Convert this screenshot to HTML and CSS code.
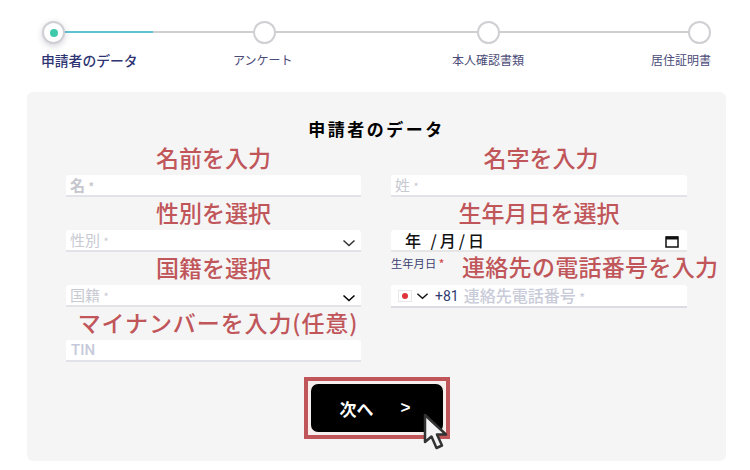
FILE: index.html
```html
<!DOCTYPE html>
<html lang="ja">
<head>
<meta charset="utf-8">
<title>申請者のデータ</title>
<link rel="stylesheet" href="styles.css">
</head>
<body>
<div class="stepper">
  <div class="track"><div class="track-fill"></div></div>
  <div class="dots">
    <span class="dot dot-active"><i></i></span>
    <span class="dot"></span>
    <span class="dot"></span>
    <span class="dot"></span>
  </div>
  <div class="step-labels">
    <span class="step-current">申請者のデータ</span>
    <span>アンケート</span>
    <span>本人確認書類</span>
    <span>居住証明書</span>
  </div>
</div>
<main class="panel">
  <h1>申請者のデータ</h1>
  <div class="grid">
    <div class="col">
      <div class="note">名前を入力</div>
      <div class="field"><span class="ph ph-bold">名 <small>*</small></span></div>
      <div class="note">性別を選択</div>
      <div class="field"><span class="ph">性別 <small>*</small></span>
        <svg class="chev" viewBox="0 0 14 8"><path d="M1.5 1.5 7 6.500l5.500-5"/></svg></div>
      <div class="note">国籍を選択</div>
      <div class="field"><span class="ph">国籍 <small>*</small></span>
        <svg class="chev chev-dark" viewBox="0 0 14 8"><path d="M1.5 1.5 7 6.500l5.500-5"/></svg></div>
      <div class="note note-wide">マイナンバーを入力(任意)</div>
      <div class="field"><span class="ph ph-tin">TIN</span></div>
    </div>
    <div class="col">
      <div class="note note-right">名字を入力</div>
      <div class="field"><span class="ph">姓 <small>*</small></span></div>
      <div class="note">生年月日を選択</div>
      <div class="field field-date"><span class="date">年 /月/日</span>
        <svg class="cal" viewBox="0 0 14 14"><path d="M1 3h12v10H1z" fill="none" stroke="#111" stroke-width="1.500"/><path d="M1 2.500h12v3H1z" fill="#111"/></svg></div>
      <div class="dob-row">
        <span class="dob">生年月日 <b>*</b></span>
        <span class="note note-phone">連絡先の電話番号を入力</span>
      </div>
      <div class="field field-phone">
        <span class="flag"><i></i></span>
        <svg class="chev chev-phone" viewBox="0 0 14 8"><path d="M1.5 1.5 7 6.500l5.500-5"/></svg>
        <span class="dial">+81</span>
        <span class="ph ph-phone">連絡先電話番号 <small>*</small></span>
      </div>
    </div>
  </div>
  <div class="actions">
    <div class="highlight">
      <button class="next" type="button"><span>次へ</span><span class="gt">&gt;</span></button>
      <svg class="cursor" viewBox="0 0 25 38"><path d="M2 2v27l6.500-5.500 5 11.500 5.500-2.500-5-11h9z" fill="#f4f4f6" stroke="#333" stroke-width="2.500" stroke-linejoin="round"/></svg>
    </div>
  </div>
</main>
</body>
</html>
```
FILE: styles.css
```css
* { box-sizing: border-box; }
html, body { margin: 0; padding: 0; }
body {
  width: 750px;
  height: 470px;
  overflow: hidden;
  background: #fff;
  font-family: "Noto Sans CJK JP", "Noto Sans", sans-serif;
}
.stepper {
  position: relative;
  padding: 21px 0 0 42px;
  height: 92px;
}
.track {
  position: absolute;
  left: 53px;
  top: 31px;
  width: 646px;
  height: 2px;
  background: #cfcfd2;
}
.track-fill {
  width: 100px;
  height: 2px;
  background: #5fc3cf;
}
.dots {
  position: relative;
  display: grid;
  grid-template-columns: 211px 224px 211px 22px;
}
.dot {
  display: flex;
  align-items: center;
  justify-content: center;
  width: 23px;
  height: 23px;
  border: 2px solid #cfcfd4;
  border-radius: 50%;
  background: #fff;
}
.dot-active { box-shadow: 0 2px 6px rgba(60, 60, 90, .22); }
.dot i {
  width: 8px;
  height: 8px;
  border-radius: 50%;
  background: #3fc9ab;
}
.step-labels {
  display: grid;
  grid-template-columns: 192px 219px 199px auto;
  margin: 7px 0 0 -1px;
  font-size: 12px;
  line-height: 18px;
  color: #4a4a78;
  white-space: nowrap;
}
.step-current {
  font-size: 13.800px;
  font-weight: 500;
  color: #2e3473;
}
.panel {
  width: 699px;
  height: 369px;
  margin-left: 27px;
  padding: 26px 39px 0;
  background: #f5f5f5;
  border-radius: 6px;
}
h1 {
  margin: 0 0 2px;
  font-size: 17px;
  line-height: 22px;
  font-weight: 700;
  letter-spacing: 2.500px;
  text-align: center;
  color: #000;
}
.grid {
  display: grid;
  grid-template-columns: 295px 296px;
  gap: 30px;
}
.col { display: flex; flex-direction: column; }
.note {
  height: 33px;
  font-size: 23px;
  line-height: 30px;
  font-weight: 500;
  text-align: center;
  color: #c0565a;
  white-space: nowrap;
}
.note-wide { padding-left: 9px; letter-spacing: .9px; }
.note-right { padding-left: 4px; }
.field {
  position: relative;
  display: flex;
  align-items: center;
  height: 22px;
  padding-left: 4px;
  background: #fff;
  border-bottom: 2px solid #e2e3e8;
  border-radius: 3px 3px 0 0;
}
.ph {
  font-size: 15px;
  line-height: 20px;
  color: #c8cad2;
}
.ph small { font-size: 11px; }
.ph-bold { font-weight: 700; color: #c4c6cc; }
.ph-tin { padding-left: 1px; font-family: Roboto, sans-serif; font-weight: 500; color: #c6c9da; }
.chev {
  position: absolute;
  right: 5px;
  top: 9px;
  width: 14px;
  height: 8px;
  fill: none;
  stroke: #333;
  stroke-width: 1.500;
}
.chev-dark { stroke: #000; }
.field-date { padding-left: 14px; border-bottom-color: #e6e6e6; }
.date { font-size: 16px; line-height: 20px; font-weight: 500; color: #111; letter-spacing: 3px; }
.cal {
  position: absolute;
  right: 8px;
  top: 4px;
  width: 14px;
  height: 14px;
}
.dob-row {
  display: flex;
  height: 33px;
  align-items: flex-start;
}
.dob {
  flex: none;
  width: 71px;
  padding-top: 3px;
  font-size: 11.300px;
  line-height: 16px;
  color: #3a4270;
  white-space: nowrap;
}
.dob b { color: #d0484c; font-weight: 500; }
.note-phone { flex: none; height: 30px; line-height: 28px; letter-spacing: .3px; }
.field-phone { padding-left: 7px; border-bottom-color: #dcdde2; height: 23px; }
.flag {
  display: flex;
  align-items: center;
  justify-content: center;
  width: 14px;
  height: 12px;
  background: #fff;
  border: 1px solid #e8e8e8;
}
.flag i { width: 6px; height: 6px; border-radius: 50%; background: #e0333c; }
.chev-phone { position: static; margin-left: 4px; width: 13px; stroke: #111; }
.dial { margin-left: 6px; font-family: Roboto, sans-serif; font-size: 14px; color: #2f3a70; }
.ph-phone { margin-left: 5px; font-size: 16px; font-weight: 500; color: #c9cbd8; }
.ph-phone small { font-size: 12px; }
.actions {
  display: flex;
  justify-content: center;
  margin-top: 15px;
}
.highlight {
  position: relative;
  width: 146px;
  height: 62px;
  padding: 3px;
  border: 4px solid #c0565a;
  background: #f7eeee;
}
.next {
  display: flex;
  align-items: center;
  width: 132px;
  height: 48px;
  padding: 0 0 0 29px;
  background: #000;
  color: #fff;
  border: 0;
  border-radius: 7px;
  font-family: inherit;
  font-size: 17px;
  font-weight: 700;
}
.gt { margin-left: 27px; font-family: "Liberation Sans", sans-serif; }
.cursor {
  position: absolute;
  left: 115px;
  top: 32px;
  width: 25px;
  height: 38px;
}
```
